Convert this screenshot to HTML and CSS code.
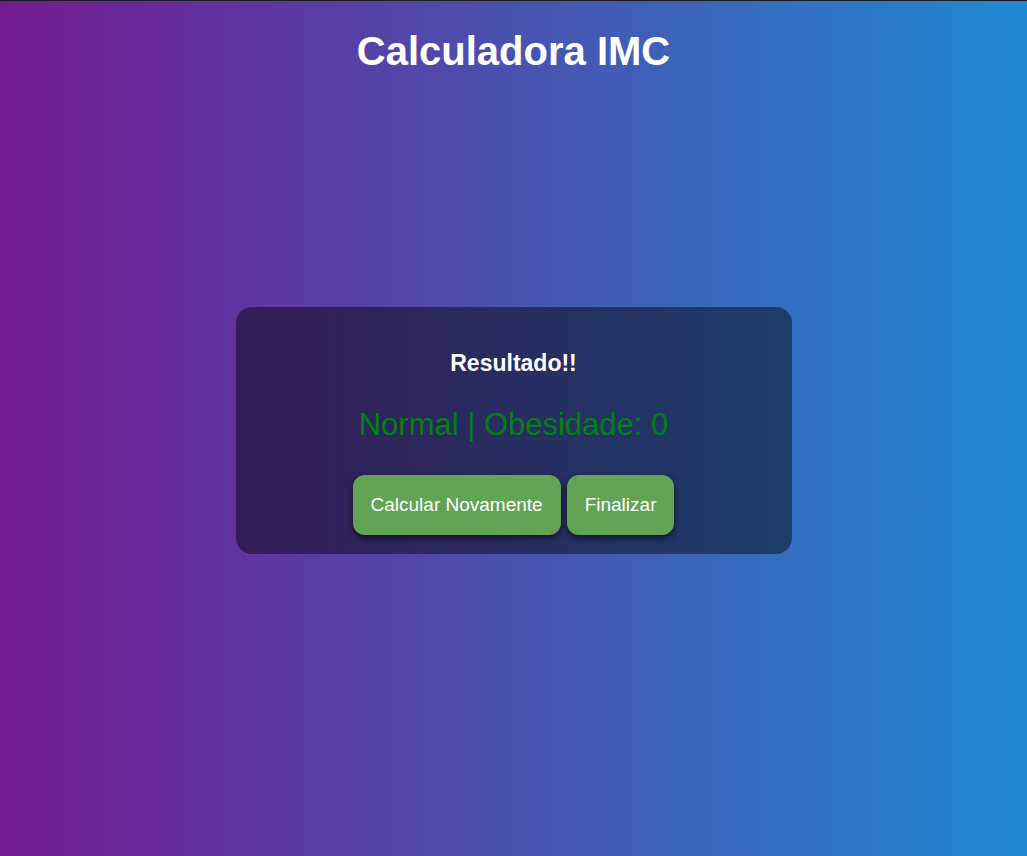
FILE: index.html
```html
<!DOCTYPE html>
<html lang="pt-BR">
<head>
<meta charset="utf-8">
<title>Calculadora IMC</title>
<link rel="stylesheet" href="styles.css">
</head>
<body>
  <header class="topo">
    <h1 class="titulo">Calculadora IMC</h1>
  </header>
  <main class="conteudo">
    <section class="cartao">
      <h2 class="cartao-titulo">Resultado!!</h2>
      <p class="resultado">Normal | Obesidade: 0</p>
      <div class="acoes">
        <button class="botao">Calcular Novamente</button>
        <button class="botao">Finalizar</button>
      </div>
    </section>
  </main>
</body>
</html>
```
FILE: styles.css
```css
* { box-sizing: border-box; }
html, body { height: 100%; }
body {
  margin: 0;
  min-height: 100vh;
  border-top: 1px solid #1b1b1b;
  background: linear-gradient(to right, #731a8f, #1f89d1);
  font-family: "Liberation Sans", Arial, sans-serif;
  color: #fff;
  display: flex;
  flex-direction: column;
}
.topo { display: flex; justify-content: center; }
.titulo {
  margin: 27px 0 0;
  font-size: 40px;
  line-height: 46px;
  font-weight: bold;
}
.conteudo {
  flex: 1;
  display: flex;
  justify-content: center;
  align-items: center;
  padding-bottom: 69px;
}
.cartao {
  width: 556px;
  border-radius: 16px;
  background: rgba(0, 0, 0, 0.45);
  padding: 41px 20px 19px;
  display: flex;
  flex-direction: column;
  align-items: center;
}
.cartao-titulo {
  margin: 0;
  font-size: 23px;
  line-height: 30px;
  font-weight: bold;
}
.resultado {
  margin: 29px 0 0;
  font-size: 31px;
  line-height: 36px;
  color: #008015;
}
.acoes {
  margin-top: 32px;
  display: flex;
  gap: 6px;
}
.botao {
  height: 60px;
  padding: 0 18px;
  border: none;
  border-radius: 12px;
  background: #63a356;
  color: #fff;
  font-family: "Liberation Sans", Arial, sans-serif;
  font-size: 19px;
  box-shadow: 0 3px 7px rgba(0, 0, 0, 0.6);
  cursor: pointer;
}
```
